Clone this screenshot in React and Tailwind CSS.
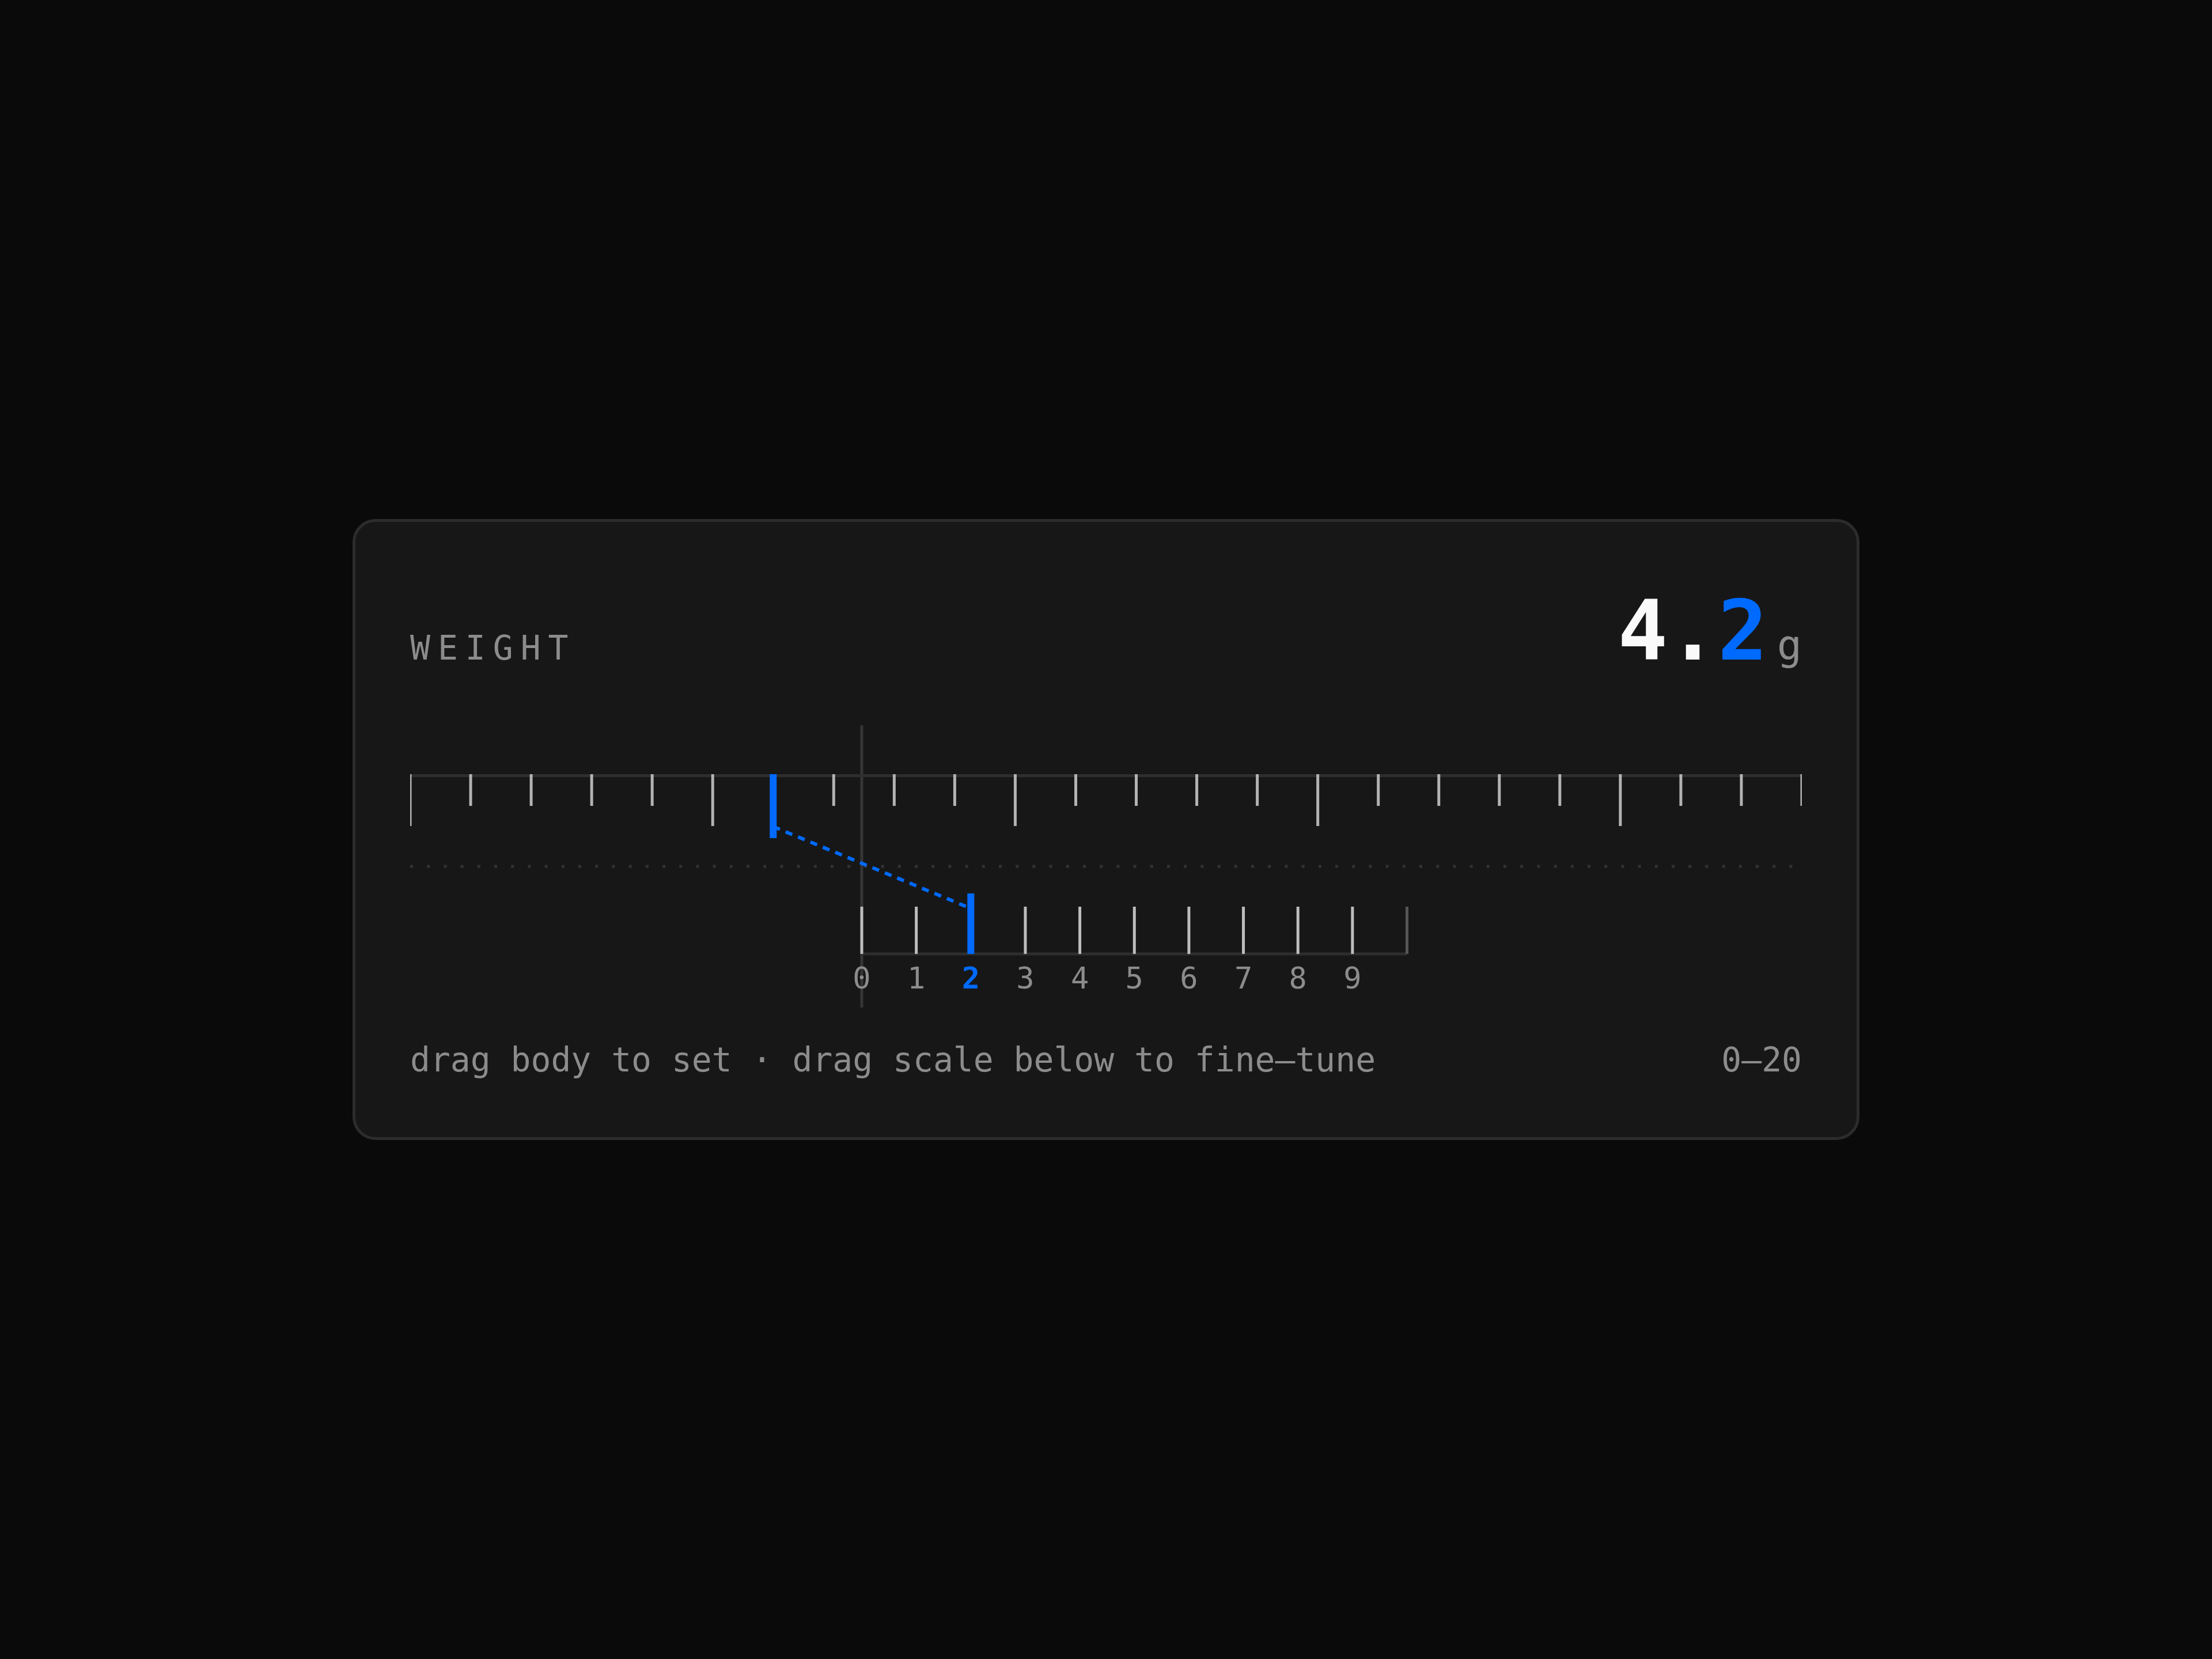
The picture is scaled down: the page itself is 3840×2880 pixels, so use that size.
import React from 'react';

const BLUE = '#006aff';
const RULER_W = 2416;
const RULER_H = 490;
const TOP_STEPS = 23;
const TOP_STEP = RULER_W / TOP_STEPS;
const ZERO_X = 784;
const FINE_STEP = 94.65;

// coarse scale on top, fine-tune decimal scale below, joined by a dashed lead
const Ruler = ({ coarse = 6, fine = 2 }) => {
  const coarseX = coarse * TOP_STEP;
  const fineX = ZERO_X + fine * FINE_STEP;

  const topTicks = [];
  for (let i = 0; i <= TOP_STEPS; i++) {
    if (i === coarse) continue;
    const x = i * TOP_STEP;
    const major = i % 5 === 0;
    topTicks.push(
      <line key={i} x1={x} x2={x} y1={85} y2={major ? 175 : 140} stroke="#b3b3b3" strokeWidth={5} />
    );
  }

  const fineTicks = [];
  for (let j = 0; j < 10; j++) {
    if (j === fine) continue;
    const x = ZERO_X + j * FINE_STEP;
    fineTicks.push(
      <line key={j} x1={x} x2={x} y1={315} y2={397} stroke="#bdbdbd" strokeWidth={5} />
    );
  }

  return (
    <svg width={RULER_W} height={RULER_H} className="block">
      {/* center hairline */}
      <line x1={ZERO_X} x2={ZERO_X} y1={0} y2={RULER_H} stroke="#363636" strokeWidth={5} />

      {/* coarse scale */}
      <line x1={0} x2={RULER_W} y1={87.5} y2={87.5} stroke="#2e2e2e" strokeWidth={5} />
      {topTicks}

      {/* divider */}
      <line x1={0} x2={RULER_W} y1={245} y2={245} stroke="#333333" strokeWidth={5} strokeDasharray="5 24.2" />

      {/* lead from coarse marker to fine marker */}
      <line x1={coarseX} y1={176} x2={fineX} y2={318} stroke={BLUE} strokeWidth={6} strokeDasharray="12.5 10.8" />
      <line x1={coarseX} x2={coarseX} y1={85} y2={196} stroke={BLUE} strokeWidth={12} />

      {/* fine scale */}
      <line x1={ZERO_X} x2={ZERO_X + 10 * FINE_STEP} y1={397} y2={397} stroke="#2e2e2e" strokeWidth={5} />
      <line
        x1={ZERO_X + 10 * FINE_STEP}
        x2={ZERO_X + 10 * FINE_STEP}
        y1={315}
        y2={397}
        stroke="#555555"
        strokeWidth={5}
      />
      {fineTicks}
      <line x1={fineX} x2={fineX} y1={292} y2={397} stroke={BLUE} strokeWidth={12} />

      {Array.from({ length: 10 }, (_, j) => (
        <text
          key={j}
          x={ZERO_X + j * FINE_STEP}
          y={457}
          textAnchor="middle"
          fontSize={52}
          fontWeight={j === fine ? 700 : 400}
          fill={j === fine ? BLUE : '#8c8c8c'}
        >
          {j}
        </text>
      ))}
    </svg>
  );
};

const App = () => {
  return (
    <div className="min-h-screen bg-[#0a0a0a] flex items-center justify-center font-['DejaVu_Sans_Mono','Liberation_Mono',monospace]">
      <div className="w-[2616px] bg-[#171717] border-[5px] border-[#2c2c2c] rounded-[40px] px-[95px] pt-[117px] pb-[90px]">
        <div className="flex items-baseline justify-between">
          <span className="text-[58px] tracking-[13px] text-[#8c8c8c]">WEIGHT</span>
          <div className="text-[144px] leading-none font-bold">
            <span className="text-[#fafafa]">4.</span>
            <span className="text-[#006aff]">2</span>
            <span className="ml-[16px] text-[72px] font-normal text-[#8c8c8c]">g</span>
          </div>
        </div>

        <div className="mt-[90px]">
          <Ruler coarse={6} fine={2} />
        </div>

        <div className="mt-[48px] flex justify-between text-[58px] text-[#8c8c8c]">
          <span>drag body to set · drag scale below to fine–tune</span>
          <span>0–20</span>
        </div>
      </div>
    </div>
  );
};

export default App;
